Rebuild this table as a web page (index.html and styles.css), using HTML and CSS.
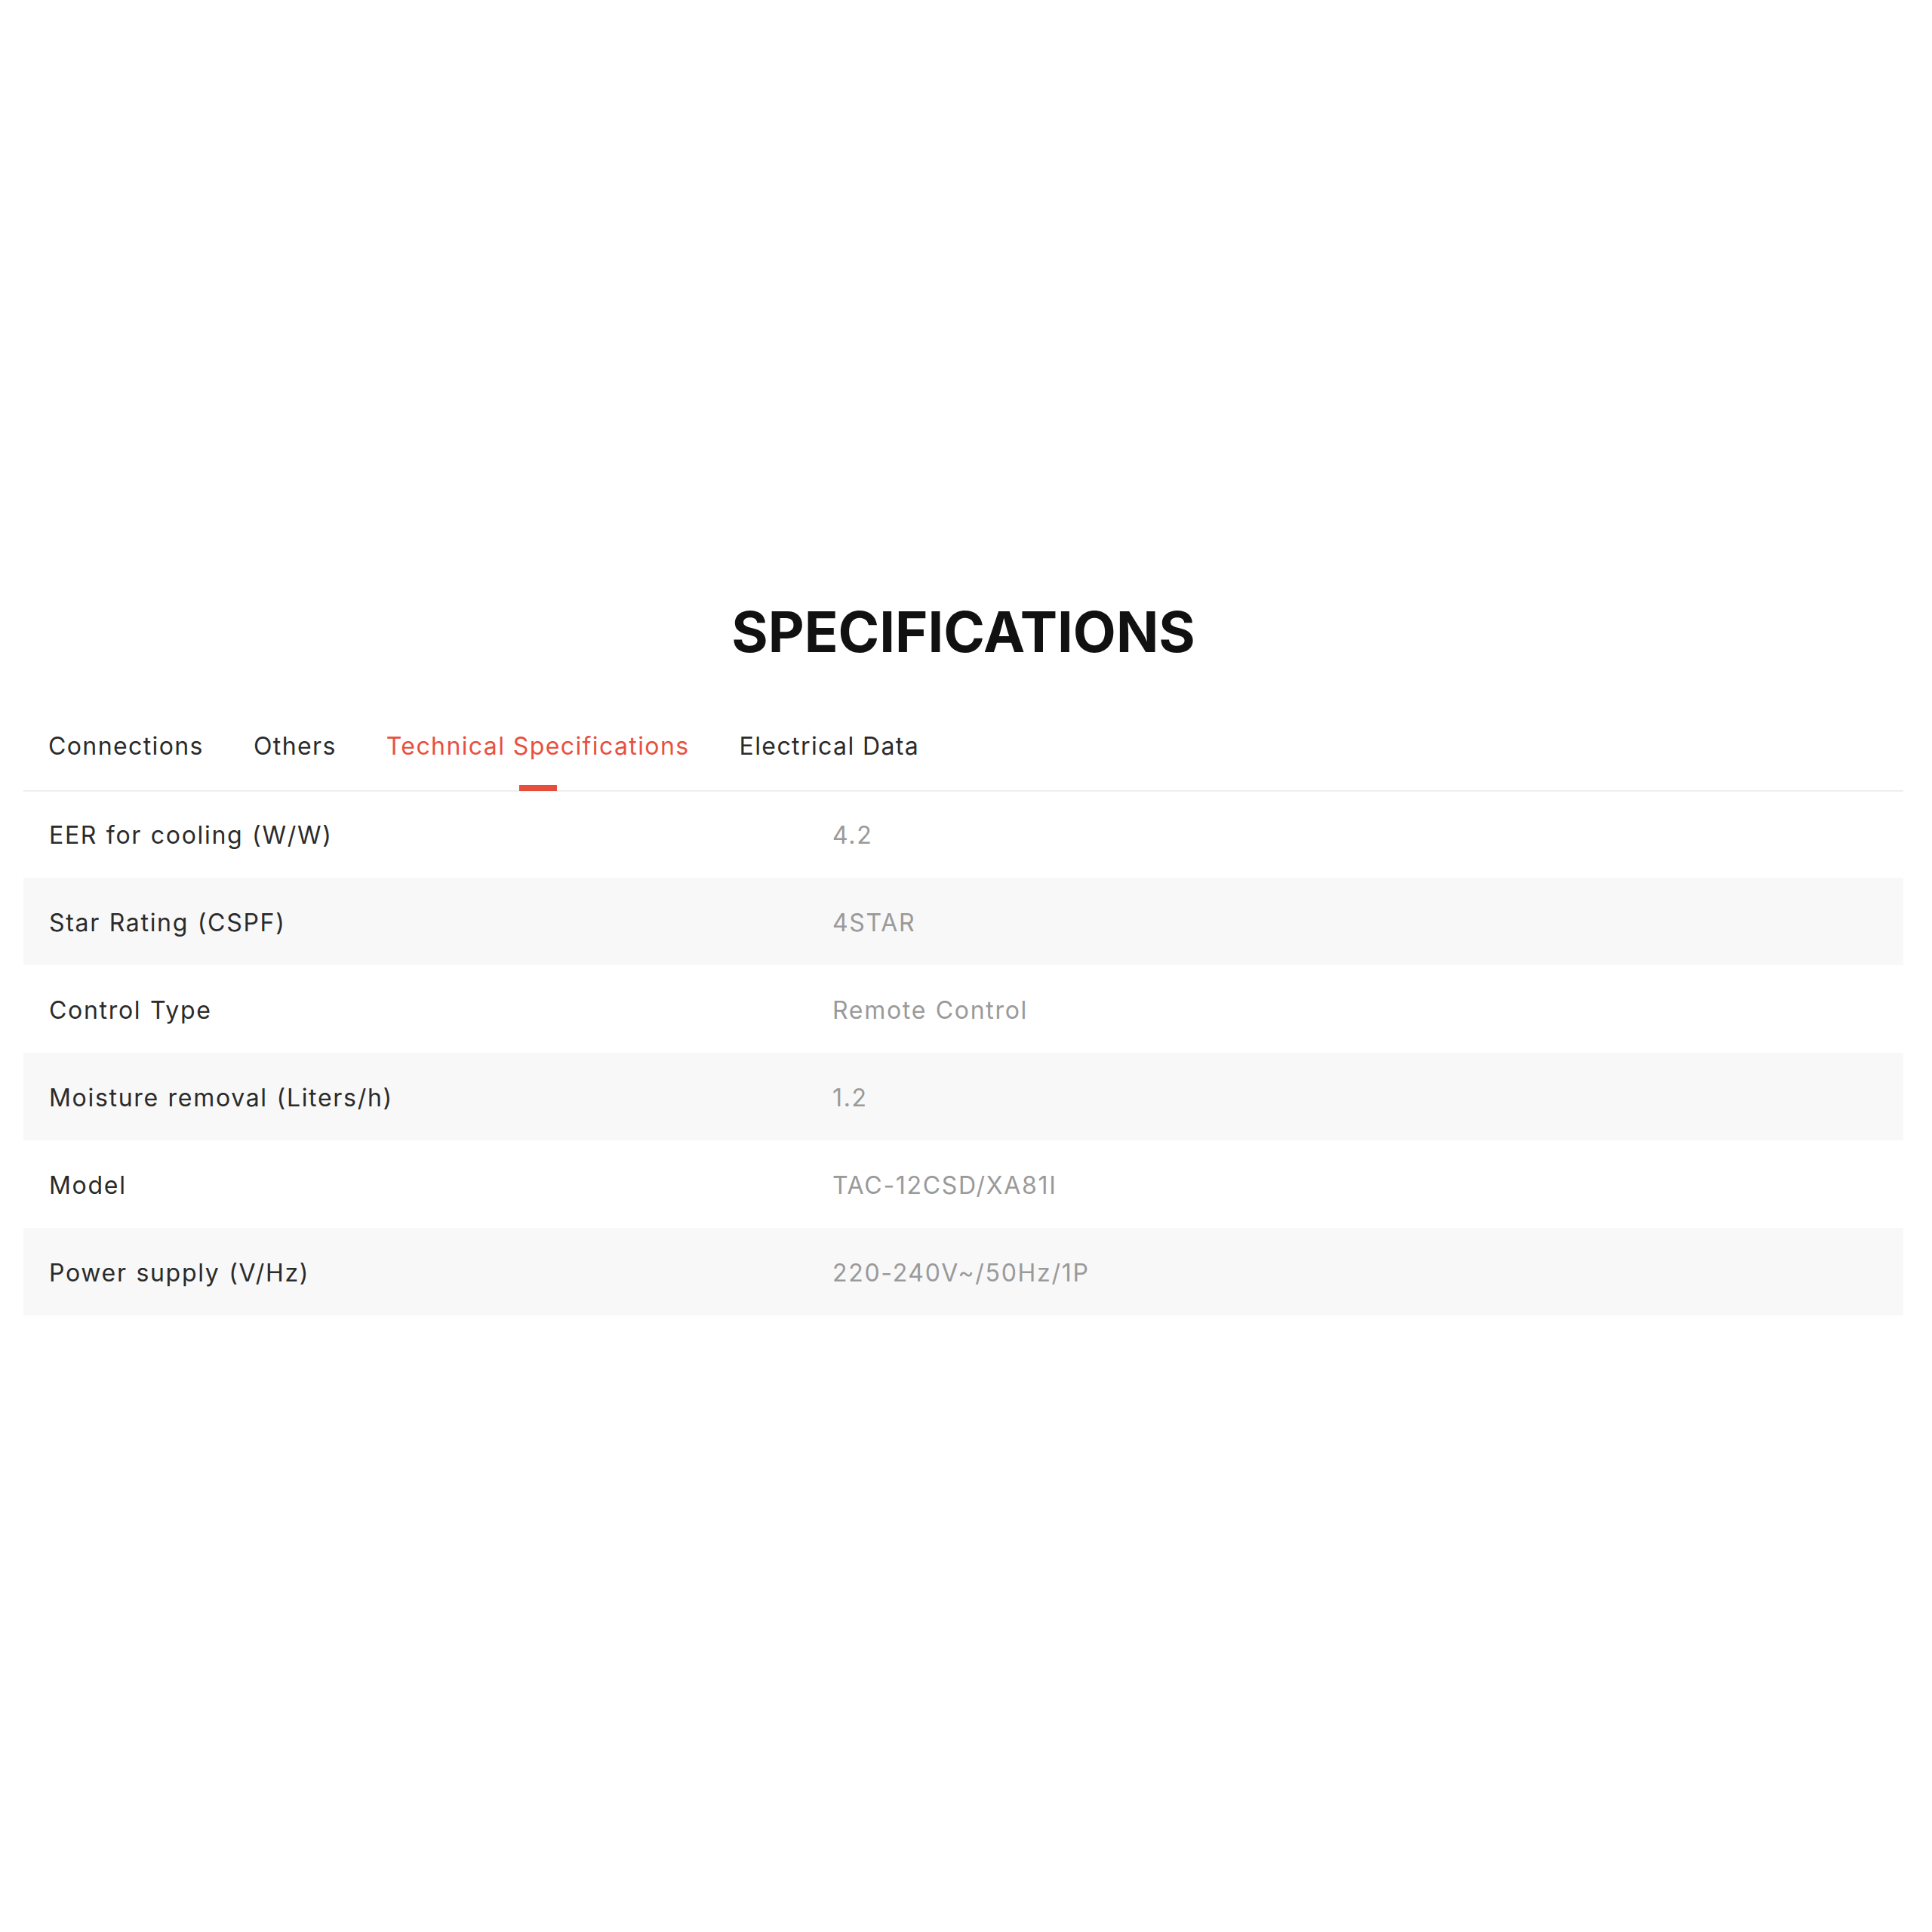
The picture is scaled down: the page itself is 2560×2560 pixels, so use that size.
FILE: index.html
```html
<!DOCTYPE html>
<html lang="en">
<head>
<meta charset="utf-8">
<title>Specifications</title>
<link rel="stylesheet" href="styles.css">
</head>
<body>
<main class="page">
  <section class="specs">
    <h2 class="specs-title">SPECIFICATIONS</h2>
    <nav class="tabs">
      <span class="tab">Connections</span>
      <span class="tab">Others</span>
      <span class="tab tab-active">Technical Specifications</span>
      <span class="tab">Electrical Data</span>
    </nav>
    <div class="spec-list">
      <div class="spec-row"><span class="spec-label">EER for cooling (W/W)</span><span class="spec-value">4.2</span></div>
      <div class="spec-row"><span class="spec-label">Star Rating (CSPF)</span><span class="spec-value">4STAR</span></div>
      <div class="spec-row"><span class="spec-label">Control Type</span><span class="spec-value">Remote Control</span></div>
      <div class="spec-row"><span class="spec-label">Moisture removal (Liters/h)</span><span class="spec-value">1.2</span></div>
      <div class="spec-row"><span class="spec-label">Model</span><span class="spec-value">TAC-12CSD/XA81I</span></div>
      <div class="spec-row"><span class="spec-label">Power supply (V/Hz)</span><span class="spec-value">220-240V~/50Hz/1P</span></div>
    </div>
  </section>
</main>
</body>
</html>
```

FILE: styles.css
```css
html, body {
  margin: 0;
  padding: 0;
  background: #ffffff;
}

body {
  font-family: "Inter", "Noto Sans", sans-serif;
  color: #2b2b2b;
}

.page {
  padding: 800px 38px 0 31px;
  min-height: 2560px;
  box-sizing: border-box;
}

.specs-title {
  margin: 0;
  text-align: center;
  font-size: 74px;
  line-height: 1;
  font-weight: 700;
  color: #111111;
  letter-spacing: 0;
}

.tabs {
  display: flex;
  padding-top: 95px;
  border-bottom: 2px solid #eeeeee;
  margin-bottom: -2px;
}

.tab {
  position: relative;
  padding: 0 33px 38px;
  font-size: 32px;
  line-height: 40px;
  letter-spacing: 1.4px;
  color: #2b2b2b;
}

.tab-active {
  color: #e8503f;
}

.tab-active::after {
  content: "";
  position: absolute;
  left: 50%;
  bottom: -1px;
  width: 50px;
  height: 8px;
  margin-left: -25px;
  background: #e74c3c;
}

.spec-row {
  display: grid;
  grid-template-columns: 41.67% 1fr;
  align-items: center;
  box-sizing: border-box;
  height: 116px;
  padding-top: 2px;
  font-size: 32px;
  letter-spacing: 1.7px;
  word-spacing: 1px;
}

.spec-row:nth-child(even) {
  background: #f8f8f8;
}

.spec-label {
  padding-left: 34px;
  color: #2b2b2b;
}

.spec-value {
  padding-left: 34px;
  color: #9a9a9a;
}
```
